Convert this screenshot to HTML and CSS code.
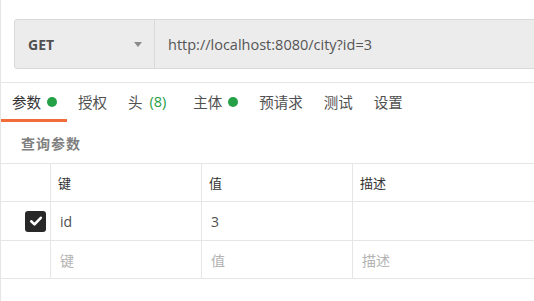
FILE: index.html
```html
<!DOCTYPE html>
<html lang="zh">
<head>
<meta charset="utf-8">
<link rel="stylesheet" href="styles.css">
</head>
<body>
<div class="page">
  <div class="urlbar">
    <div class="method">
      <span class="method-name">GET</span>
      <span class="caret"></span>
    </div>
    <div class="url">http://localhost:8080/city?id=3</div>
  </div>
  <div class="tabs">
    <div class="tab active">参数<span class="dot"></span></div>
    <div class="tab">授权</div>
    <div class="tab tab-count">头<span class="count">(8)</span></div>
    <div class="tab">主体<span class="dot"></span></div>
    <div class="tab">预请求</div>
    <div class="tab">测试</div>
    <div class="tab">设置</div>
  </div>
  <div class="section-title">查询参数</div>
  <div class="table">
    <div class="row head">
      <div class="cell c0"></div>
      <div class="cell c1">键</div>
      <div class="cell c2">值</div>
      <div class="cell c3">描述</div>
    </div>
    <div class="row">
      <div class="cell c0"><span class="check"><svg viewBox="0 0 20 20" width="20" height="20"><path d="M5.2 10.3 L8.5 13.4 L14.8 6.8" fill="none" stroke="#fff" stroke-width="2.6" stroke-linecap="round" stroke-linejoin="round"/></svg></span></div>
      <div class="cell c1 val">id</div>
      <div class="cell c2 val">3</div>
      <div class="cell c3 val"></div>
    </div>
    <div class="row last">
      <div class="cell c0"></div>
      <div class="cell c1 ph">键</div>
      <div class="cell c2 ph">值</div>
      <div class="cell c3 ph">描述</div>
    </div>
  </div>
</div>
</body>
</html>
```
FILE: styles.css
```css
* { box-sizing: border-box; }
html, body { margin: 0; padding: 0; background: #fff; }
body {
  font-family: "Open Sans", "Noto Sans CJK SC", sans-serif;
  color: #505050;
  width: 534px;
  height: 301px;
  overflow: hidden;
}
.page {
  border-left: 1px solid #e6e6e6;
  height: 301px;
  padding-top: 19px;
}
.urlbar {
  margin-left: 13px;
  height: 50px;
  width: 540px;
  display: flex;
  background: #ececec;
  border: 1px solid #d9d9d9;
  border-radius: 3px;
}
.method {
  width: 140px;
  flex: none;
  display: flex;
  align-items: center;
  justify-content: space-between;
  padding: 0 12px 0 13px;
  border-right: 1px solid #dadada;
}
.method-name {
  font-weight: 700;
  font-size: 14px;
  color: #505050;
}
.caret {
  width: 0;
  height: 0;
  border-left: 4px solid transparent;
  border-right: 4px solid transparent;
  border-top: 5px solid #8a8a8a;
  margin-top: 1px;
}
.url {
  display: flex;
  align-items: center;
  padding-left: 13px;
  font-size: 14.5px;
  color: #555;
}
.tabs {
  margin-top: 13px;
  border-top: 1px solid #e6e6e6;
  display: flex;
  height: 40px;
}
.tab {
  display: flex;
  align-items: center;
  padding: 1px 10px 0 11px;
  font-size: 14.5px;
  color: #505050;
  border-bottom: 3px solid transparent;
}
.tab.active {
  border-bottom-color: #f26b3a;
  color: #333;
}
.tab-count { padding-right: 16px; }
.dot {
  width: 10px;
  height: 10px;
  border-radius: 50%;
  background: #26a047;
  margin-left: 6px;
}
.count {
  color: #26a047;
  margin-left: 7px;
}
.section-title {
  font-size: 14px;
  font-weight: 700;
  color: #808080;
  padding: 11px 0 0 20px;
  letter-spacing: 1px;
  height: 41px;
}
.table {
  border-top: 1px solid #e6e6e6;
}
.row {
  display: flex;
  height: 39px;
  border-bottom: 1px solid #e6e6e6;
}
.row.head { height: 38px; }
.row.last { height: 38px; }
.cell {
  display: flex;
  align-items: center;
  font-size: 14px;
  color: #505050;
}
.c0 {
  width: 50px;
  justify-content: flex-end;
  padding-right: 4px;
  border-right: 1px solid #e6e6e6;
}
.c1, .c2 {
  width: 151px;
  border-right: 1px solid #e6e6e6;
}
.c3 { flex: 1; }
.head .cell {
  font-size: 13px;
  color: #333;
  padding-left: 7px;
}
.head .c0 { padding-left: 0; }
.val, .ph { padding-left: 9px; }
.ph { color: #b3b3b3; }
.check {
  width: 21px;
  height: 21px;
  border-radius: 3px;
  background: #282828;
  display: flex;
  align-items: center;
  justify-content: center;
}
.check svg { display: block; }
```
